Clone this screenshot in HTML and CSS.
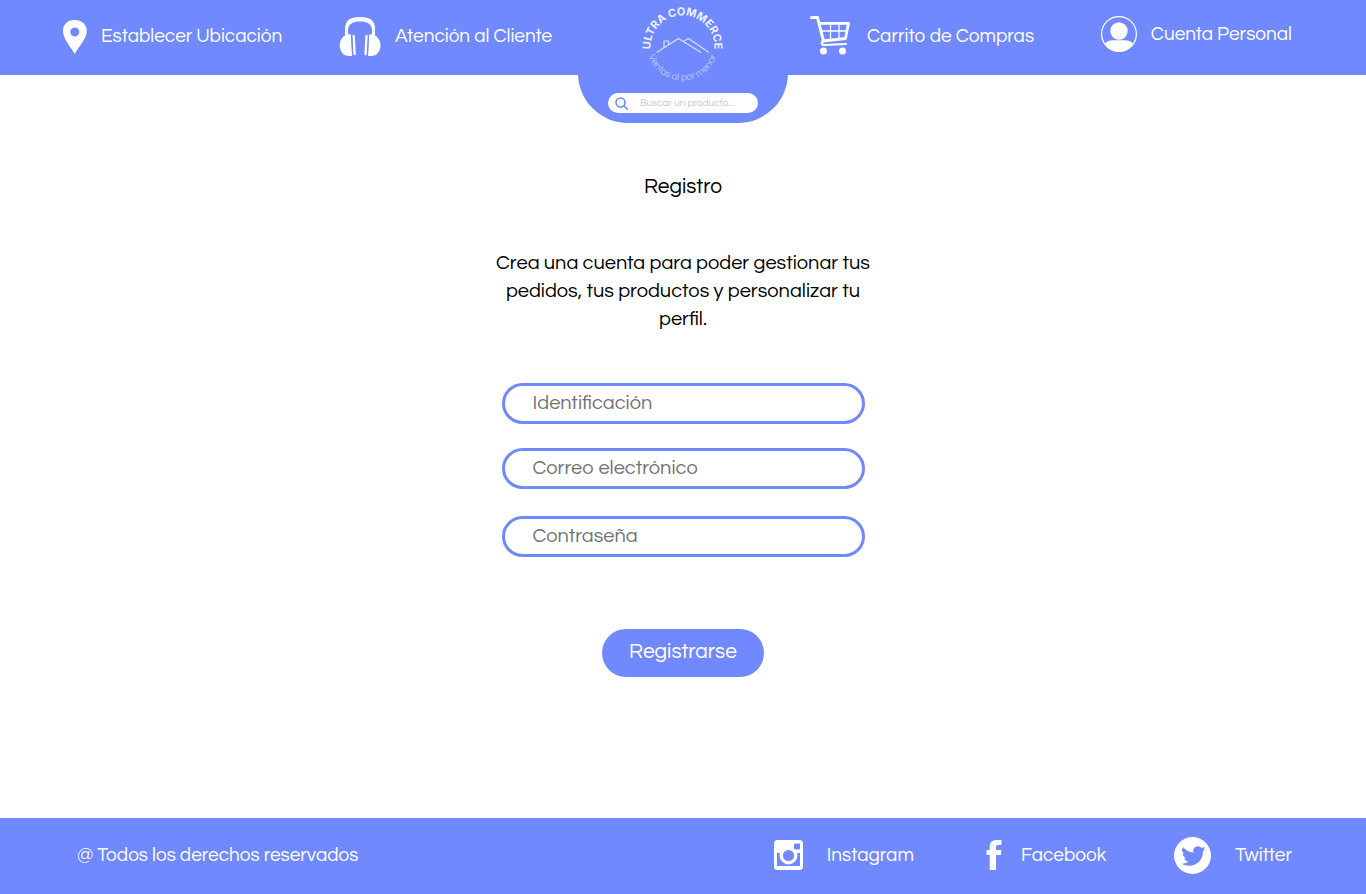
FILE: index.html
```html
<!DOCTYPE html>
<html lang="es">
<head>
<meta charset="utf-8">
<meta name="viewport" content="width=device-width, initial-scale=1">
<title>Ultra Commerce - Registro</title>
<link rel="stylesheet" href="styles.css">
</head>
<body>
<header class="header">
  <nav class="nav nav-left" aria-label="Servicios">
    <a class="nav-link" href="#ubicacion">
      <svg width="25" height="36" viewBox="0 0 25 36" fill="#fff" aria-hidden="true"><path fill-rule="evenodd" d="M12.500 2C5.500 2 1 6.500 1 13c0 7.500 7 15 11.800 23C17 28 24.800 20.500 24.800 13c0-6.500-5-11-12.300-11zm.3 7.500a4.500 4.500 0 1 1 0 9 4.500 4.500 0 0 1 0-9z"/></svg>
      <span>Establecer Ubicación</span>
    </a>
    <a class="nav-link" href="#atencion">
      <svg width="42" height="40" viewBox="0 0 42 40" fill="#fff" aria-hidden="true"><path d="M6 20V13C6 4.500 11 1 21 1s15 3.500 15 12v7h-3v-5c0-7-4-9.500-12-9.500S9 8 9 15v5z"/><path d="M6 19.500l4.500-1.500c1 0 1.500 1 1.500 2l1 20h-3C4 40 .8 35 .8 29.500.8 25 3 21 6 19.500z"/><path d="M36 19.500 31.500 18c-1 0-1.500 1-1.500 2l-1 20h3c6 0 9.500-5 9.500-10.500 0-4.500-2.500-8.500-5.500-10z"/><path d="m14.600 20 1 18M27.600 20l-1 18" fill="none" stroke="#fff" stroke-width="2.400" stroke-linecap="round"/><path d="m12.800 19 1 21M29.400 19l-1 21" stroke="#7089ff" stroke-width="1"/></svg>
      <span>Atención al Cliente</span>
    </a>
  </nav>

  <div class="brand">
    <svg class="logo" width="86" height="86" viewBox="0 0 86 86" role="img" aria-label="Ultra Commerce">
      <defs>
        <path id="arc-top" d="M11 50A32 32 0 1 1 74 50"/>
        <path id="arc-bottom" d="M7 42a35.500 35.500 0 0 0 71 0"/>
      </defs>
      <text class="logo-name"><textPath href="#arc-top" startOffset="50%">ULTRA COMMERCE</textPath></text>
      <text class="logo-tag"><textPath href="#arc-bottom" startOffset="50%">Ventas al por menor</textPath></text>
      <path class="logo-roof" d="M16.500 49.500 38.500 35.500l22.500 14M44 38l4.500-2.500 20.500 14M24 45v-7h4.500v4"/>
    </svg>
    <form class="search" role="search">
      <svg width="13" height="13" viewBox="0 0 13 13" fill="none" stroke="#7089ff" stroke-width="1.600" stroke-linecap="round" aria-hidden="true"><circle cx="5.500" cy="5.500" r="4.500"/><path d="m9 9 3.200 3.200"/></svg>
      <input class="search-input" type="search" placeholder="Buscar un producto..." aria-label="Buscar un producto">
    </form>
  </div>

  <nav class="nav nav-right" aria-label="Cuenta">
    <a class="nav-link nav-cart" href="#carrito">
      <svg width="40" height="42" viewBox="0 0 40 42" fill="none" stroke="#fff" stroke-linecap="round" stroke-linejoin="round" aria-hidden="true"><path d="M1.500 2.500h6L13.500 26" stroke-width="3"/><path d="M10 8.300h28.500L35.500 23.500 13 26" stroke-width="2.800"/><path d="M11 16h26M20.500 9v16M29 9v15" stroke-width="1.300"/><path d="M13.500 26c-3 1.500-1.500 4 .5 4L36 29" stroke-width="2.200"/><circle cx="13.500" cy="36" r="3.500" fill="#fff" stroke="none"/><circle cx="32.500" cy="36" r="3.500" fill="#fff" stroke="none"/></svg>
      <span>Carrito de Compras</span>
    </a>
    <a class="nav-link nav-account" href="#cuenta">
      <svg width="36" height="36" viewBox="0 0 36 36" aria-hidden="true"><circle cx="18" cy="18" r="17.400" fill="none" stroke="#fff" stroke-width="1.200"/><circle cx="18" cy="15" r="8.700" fill="#fff"/><path d="M4 28c1.500-3 4.500-3.800 8-3.800h12c3.500 0 6.500.8 8 3.800-3 5-8 7.500-14 7.500S7 33 4 28z" fill="#fff"/></svg>
      <span>Cuenta Personal</span>
    </a>
  </nav>
</header>

<main class="main">
  <h1 class="title">Registro</h1>
  <p class="intro">Crea una cuenta para poder gestionar tus pedidos, tus productos y personalizar tu perfil.</p>
  <form class="form">
    <input class="field" type="text" placeholder="Identificación" aria-label="Identificación">
    <input class="field" type="email" placeholder="Correo electrónico" aria-label="Correo electrónico">
    <input class="field field-password" type="password" placeholder="Contraseña" aria-label="Contraseña">
    <button class="submit" type="submit">Registrarse</button>
  </form>
</main>

<footer class="footer">
  <span>@ Todos los derechos reservados</span>
  <nav class="social" aria-label="Redes sociales">
    <a class="social-link instagram" href="#instagram">
      <svg width="29" height="30" viewBox="0 0 29 30" aria-hidden="true"><rect width="29" height="30" rx="3.500" fill="#fff"/><rect x="20" y="3.500" width="6" height="6" rx="1" fill="#7089ff"/><path d="M3 13h23v13H3z" fill="#7089ff"/><circle cx="14.500" cy="15.500" r="9" fill="#fff"/><circle cx="14.500" cy="15.500" r="5.600" fill="#7089ff"/></svg>
      <span>Instagram</span>
    </a>
    <a class="social-link facebook" href="#facebook">
      <svg width="16" height="30" viewBox="0 0 16 30" fill="#fff" aria-hidden="true"><path d="M3.700 30V15H.5v-5h3.200V7C3.700 2.500 6.300 0 10.500 0h5v5h-3.300C10.700 5 10 5.700 10 7.300V10h5.500l-.6 5H10v15z"/></svg>
      <span>Facebook</span>
    </a>
    <a class="social-link twitter" href="#twitter">
      <svg width="37" height="37" viewBox="0 0 37 37" aria-hidden="true"><circle cx="18.500" cy="18.500" r="18.500" fill="#fff"/><path transform="translate(7.500 9)" fill="#7089ff" d="M24 2.600c-.9.400-1.800.7-2.800.8 1-.6 1.800-1.600 2.200-2.700-1 .6-2 1-3.100 1.200A4.900 4.900 0 0 0 11.900 6.400C7.800 6.200 4.200 4.200 1.700 1.200-.4 3.500.6 6.400 3.200 7.800c-.8 0-1.600-.2-2.200-.6 0 2.300 1.600 4.400 3.900 4.900-.7.200-1.500.2-2.200.1.600 2 2.400 3.400 4.600 3.400A9.900 9.900 0 0 1 0 17.600c2.200 1.400 4.800 2.200 7.500 2.200 9.100 0 14.300-7.700 14-14.600 1-.7 1.800-1.600 2.500-2.600z"/></svg>
      <span>Twitter</span>
    </a>
  </nav>
</footer>
</body>
</html>
```

FILE: styles.css
```css
* {
  box-sizing: border-box;
}

body {
  margin: 0;
  min-height: 100vh;
  display: flex;
  flex-direction: column;
  background: #fff;
  color: #000;
  font-family: Questrial, Inter, "Open Sans", sans-serif;
  font-size: 19px;
  font-weight: 300;
}

a {
  color: #fff;
  text-decoration: none;
}

svg {
  display: block;
  flex: none;
}

.header {
  display: grid;
  grid-template-columns: 1fr 210px 1fr;
  align-items: start;
  height: 75px;
  background: #7089ff;
}

.nav {
  display: flex;
  justify-content: space-between;
  align-items: center;
  height: 72px;
  white-space: nowrap;
}

.nav-left {
  padding: 0 26px 0 62px;
}

.nav-right {
  padding: 0 74px 0 22px;
}

.nav-link {
  display: flex;
  align-items: center;
  gap: 14px;
}

.nav-cart {
  gap: 17px;
}

.nav-account {
  padding-bottom: 4px;
}

.brand {
  display: flex;
  flex-direction: column;
  align-items: center;
  gap: 4px;
  height: 123px;
  padding-top: 3px;
  border-radius: 0 0 50px 50px;
  background: #7089ff;
}

.logo {
  overflow: visible;
}

.logo-name {
  fill: #fff;
  fill-opacity: 0.9;
  font-family: Inter, sans-serif;
  font-size: 11px;
  font-weight: 700;
  text-anchor: middle;
}

.logo-tag {
  fill: #fff;
  fill-opacity: 0.5;
  font-size: 10px;
  font-weight: 400;
  text-anchor: middle;
}

.logo-roof {
  fill: none;
  stroke: #d5ddff;
  stroke-width: 1.2;
}

.search {
  display: flex;
  align-items: center;
  gap: 12px;
  width: 150px;
  height: 20px;
  padding: 0 7px;
  border-radius: 10px;
  background: #fff;
}

.search-input {
  flex: 1;
  min-width: 0;
  padding: 0;
  border: 0;
  outline: 0;
  background: transparent;
  font: inherit;
  font-size: 10px;
}

.search-input::placeholder {
  color: #c9c9c9;
  opacity: 1;
}

.main {
  flex: 1;
  display: flex;
  flex-direction: column;
  align-items: center;
  padding: 98px 24px 40px;
}

.title {
  margin: 0 0 48px;
  font-size: 21px;
  font-weight: 300;
  line-height: 28px;
}

.intro {
  width: 100%;
  max-width: 390px;
  margin: 0 0 50px;
  font-size: 20px;
  line-height: 28px;
  text-align: center;
}

.form {
  display: flex;
  flex-direction: column;
  align-items: center;
  gap: 24px;
  width: 100%;
  max-width: 363px;
}

.field {
  width: 100%;
  height: 41px;
  padding: 0 28px 2px;
  border: 3px solid #7089ff;
  border-radius: 21px;
  background: #fff;
  font: inherit;
  font-size: 20px;
}

.field::placeholder {
  color: #737373;
  opacity: 1;
}

.field-password {
  margin-top: 3px;
}

.submit {
  height: 48px;
  margin-top: 48px;
  padding: 0 27px 3px;
  border: 0;
  border-radius: 24px;
  background: #7089ff;
  color: #fff;
  font: inherit;
  font-size: 21px;
}

.footer {
  display: flex;
  justify-content: space-between;
  align-items: center;
  min-height: 76px;
  padding: 0 74px 2px 77px;
  background: #7089ff;
  color: #fff;
}

.social {
  display: flex;
  gap: 68px;
}

.social-link {
  display: flex;
  align-items: center;
  gap: 24px;
}

.instagram {
  margin-right: 4px;
}

.facebook {
  gap: 19px;
}
```
